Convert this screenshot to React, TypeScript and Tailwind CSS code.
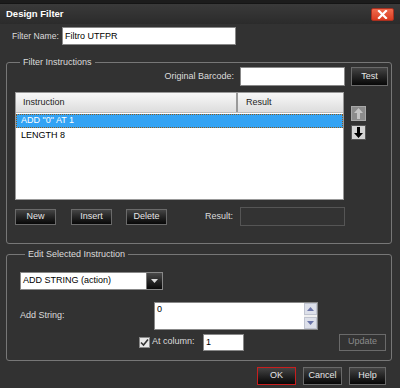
import React from "react";

const btnBase =
  "flex items-center justify-center border bg-gradient-to-b from-[#454545] to-[#080808] text-[#e6e6e6]";
const btn = btnBase + " border-[#6a6a6a]";

export default function App() {
  return (
    <div className="w-[400px] h-[388px] overflow-hidden whitespace-nowrap bg-[#323232] font-['Liberation_Sans',Arial,sans-serif] text-[9px] text-[#dcdcdc] flex flex-col">
      <div className="h-[3px] bg-[#1c1c1c]" />
      <div className="h-[21px] flex items-center justify-between pl-[6px] pr-[6px] bg-gradient-to-b from-[#3a3a3a] to-[#2b2b2b] border-t border-[#151515]">
        <span className="font-bold text-white text-[9.5px]">Design Filter</span>
        <div className="w-[23px] h-[13px] rounded-[2px] bg-gradient-to-b from-[#f06a4c] to-[#d83a1e] border border-[#a83020] flex items-center justify-center">
          <svg width="11" height="9" viewBox="0 0 11 9">
            <path d="M2 1 L9 8 M9 1 L2 8" stroke="#fff" strokeWidth="2.2" strokeLinecap="square" />
          </svg>
        </div>
      </div>

      <div className="flex items-center mt-[3px] pl-[12px]">
        <span className="w-[50px] text-[8.6px]">Filter Name:</span>
        <div className="w-[174px] h-[18px] bg-white border border-[#888] text-black px-[2px] leading-[16px]">Filtro UTFPR</div>
      </div>

      <fieldset className="mt-[12px] ml-[6px] w-[386px] border border-[#777] rounded-[3px] pl-[8px] pr-[3px] pb-[17px]">
        <legend className="ml-[5px] px-[3px] h-[10px] leading-[10px]">Filter Instructions</legend>
        <div className="flex items-center justify-end">
          <span className="mr-[6px]">Original Barcode:</span>
          <div className="w-[105px] h-[19px] bg-white border border-[#888]" />
          <div className={btn + " ml-[6px] w-[37px] h-[19px]"}>Test</div>
        </div>
        <div className="flex mt-[6px]">
          <div className="w-[329px] h-[108px] bg-white border border-[#999] flex flex-col">
            <div className="h-[20px] flex items-stretch bg-gradient-to-b from-[#f8f8f8] to-[#dddddd] text-[#222] border-b border-[#bbb]">
              <div className="w-[222px] flex items-center pl-[7px] border-r-2 border-[#999]">Instruction</div>
              <div className="flex items-center pl-[8px]">Result</div>
            </div>
            <div className="h-[14px] mt-[1px] bg-[#33a3f4] border border-dotted border-[#8a5a20] text-white flex items-center pl-[4px]">ADD "0" AT 1</div>
            <div className="h-[14px] mt-[1px] text-black flex items-center pl-[5px]">LENGTH 8</div>
          </div>
          <div className="flex flex-col ml-[7px] mt-[14px] gap-[4px]">
            <div className="w-[15px] h-[15px] bg-[#8c8c8c] border border-[#a8a8a8] flex items-center justify-center">
              <svg width="9" height="11" viewBox="0 0 9 11">
                <path d="M4.5 0 L9 5 L6 5 L6 11 L3 11 L3 5 L0 5 Z" fill="#c4c4c4" />
              </svg>
            </div>
            <div className="w-[15px] h-[15px] bg-[#d4d4d4] border border-[#555] flex items-center justify-center">
              <svg width="9" height="11" viewBox="0 0 9 11">
                <path d="M3 0 L6 0 L6 6 L9 6 L4.5 11 L0 6 L3 6 Z" fill="#000" />
              </svg>
            </div>
          </div>
        </div>
        <div className="flex items-center mt-[7px] h-[19px]">
          <div className={btn + " w-[41px] h-[16px]"}>New</div>
          <div className={btn + " ml-[15px] w-[41px] h-[16px]"}>Insert</div>
          <div className={btn + " ml-[14px] w-[41px] h-[16px]"}>Delete</div>
          <span className="ml-[38px] w-[35px]">Result:</span>
          <div className="w-[105px] h-[19px] border border-[#555] bg-[#333]" />
        </div>
      </fieldset>

      <fieldset className="mt-[5px] ml-[6px] w-[386px] border border-[#777] rounded-[3px] pl-[13px] pr-[5px] pb-[9px]">
        <legend className="ml-[5px] px-[3px] h-[10px] leading-[10px]">Edit Selected Instruction</legend>
        <div className="mt-[13px] w-[143px] h-[18px] flex border border-[#888] bg-white">
          <div className="flex-1 text-black flex items-center pl-[2px]">ADD STRING (action)</div>
          <div className="w-[16px] bg-gradient-to-b from-[#4a4a4a] to-[#0a0a0a] border-l border-[#777] flex items-center justify-center">
            <svg width="7" height="4" viewBox="0 0 7 4">
              <path d="M0 0 L7 0 L3.5 4 Z" fill="#ddd" />
            </svg>
          </div>
        </div>
        <div className="flex mt-[12px] h-[28px]">
          <span className="w-[134px] pt-[7px]">Add String:</span>
          <div className="w-[164px] h-[28px] bg-white border border-[#888] flex">
            <div className="flex-1 text-black pl-[2px] leading-[12px]">0</div>
            <div className="w-[13px] flex flex-col justify-between bg-[#f0f0f0]">
              <div className="h-[12px] bg-[#dde0ea] border border-[#c0c4d0] flex items-center justify-center">
                <svg width="7" height="4" viewBox="0 0 7 4"><path d="M0 4 L7 4 L3.5 0 Z" fill="#6a74a8" /></svg>
              </div>
              <div className="h-[12px] bg-[#dde0ea] border border-[#c0c4d0] flex items-center justify-center">
                <svg width="7" height="4" viewBox="0 0 7 4"><path d="M0 0 L7 0 L3.5 4 Z" fill="#6a74a8" /></svg>
              </div>
            </div>
          </div>
        </div>
        <div className="flex items-center mt-[3px] h-[18px]">
          <div className="ml-[119px] w-[11px] h-[11px] bg-[#e8e8e8] border border-[#888] flex items-center justify-center">
            <svg width="9" height="9" viewBox="0 0 9 9">
              <path d="M1 4.5 L3.5 7 L8 1.5" stroke="#333" strokeWidth="1.6" fill="none" />
            </svg>
          </div>
          <span className="ml-[2px] w-[51px]">At column:</span>
          <div className="w-[41px] h-[17px] bg-white border border-[#888] text-black pl-[2px] leading-[15px]">1</div>
          <div className="ml-auto w-[47px] h-[17px] border border-[#6a6a6a] bg-[#333] text-[#8a8a8a] flex items-center justify-center">Update</div>
        </div>
      </fieldset>

      <div className="flex justify-end mt-[6px] pr-[14px] gap-[7px]">
        <div className={btnBase + " w-[39px] h-[18px] border-[#c81e1e]"}>OK</div>
        <div className={btn + " w-[39px] h-[18px]"}>Cancel</div>
        <div className={btn + " w-[37px] h-[18px]"}>Help</div>
      </div>
    </div>
  );
}
